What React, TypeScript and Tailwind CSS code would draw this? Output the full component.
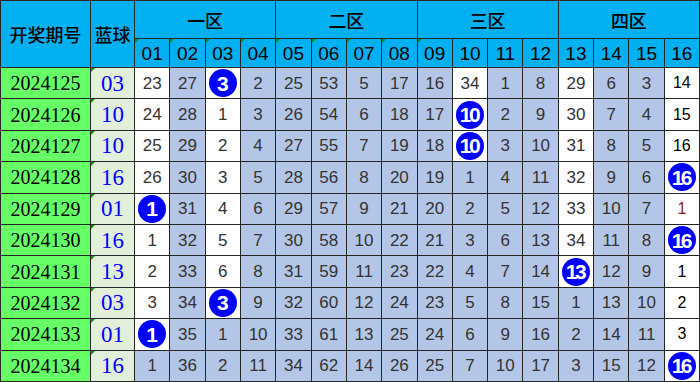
import React from 'react'

// 0 = blue cell, 1 = white cell, 2 = ball (white cell)
type Row = { issue: string; blue: string; nums: number[]; marks: number[] }

const rows: Row[] = [
  { issue: '2024125', blue: '03', nums: [23, 27, 3, 2, 25, 53, 5, 17, 16, 34, 1, 8, 29, 6, 3, 14], marks: [1, 0, 2, 0, 0, 0, 0, 0, 0, 1, 0, 0, 1, 0, 0, 1] },
  { issue: '2024126', blue: '10', nums: [24, 28, 1, 3, 26, 54, 6, 18, 17, 10, 2, 9, 30, 7, 4, 15], marks: [1, 0, 1, 0, 0, 0, 0, 0, 0, 2, 0, 0, 1, 0, 0, 1] },
  { issue: '2024127', blue: '10', nums: [25, 29, 2, 4, 27, 55, 7, 19, 18, 10, 3, 10, 31, 8, 5, 16], marks: [1, 0, 1, 0, 0, 0, 0, 0, 0, 2, 0, 0, 1, 0, 0, 1] },
  { issue: '2024128', blue: '16', nums: [26, 30, 3, 5, 28, 56, 8, 20, 19, 1, 4, 11, 32, 9, 6, 16], marks: [1, 0, 1, 0, 0, 0, 0, 0, 0, 0, 0, 0, 1, 0, 0, 2] },
  { issue: '2024129', blue: '01', nums: [1, 31, 4, 6, 29, 57, 9, 21, 20, 2, 5, 12, 33, 10, 7, 1], marks: [2, 0, 1, 0, 0, 0, 0, 0, 0, 0, 0, 0, 1, 0, 0, 1] },
  { issue: '2024130', blue: '16', nums: [1, 32, 5, 7, 30, 58, 10, 22, 21, 3, 6, 13, 34, 11, 8, 16], marks: [1, 0, 1, 0, 0, 0, 0, 0, 0, 0, 0, 0, 1, 0, 0, 2] },
  { issue: '2024131', blue: '13', nums: [2, 33, 6, 8, 31, 59, 11, 23, 22, 4, 7, 14, 13, 12, 9, 1], marks: [1, 0, 1, 0, 0, 0, 0, 0, 0, 0, 0, 0, 2, 0, 0, 1] },
  { issue: '2024132', blue: '03', nums: [3, 34, 3, 9, 32, 60, 12, 24, 23, 5, 8, 15, 1, 13, 10, 2], marks: [1, 0, 2, 0, 0, 0, 0, 0, 0, 0, 0, 0, 0, 0, 0, 1] },
  { issue: '2024133', blue: '01', nums: [1, 35, 1, 10, 33, 61, 13, 25, 24, 6, 9, 16, 2, 14, 11, 3], marks: [2, 0, 0, 0, 0, 0, 0, 0, 0, 0, 0, 0, 0, 0, 0, 1] },
  { issue: '2024134', blue: '16', nums: [1, 36, 2, 11, 34, 62, 14, 26, 25, 7, 10, 17, 3, 15, 12, 16], marks: [0, 0, 0, 0, 0, 0, 0, 0, 0, 0, 0, 0, 0, 0, 0, 2] },
]

const zones = ['一区', '二区', '三区', '四区']
const cols = Array.from({ length: 16 }, (_, i) => String(i + 1).padStart(2, '0'))

const sans = "font-['Liberation_Sans','Noto_Sans_CJK_SC',sans-serif]"
const cjk = "font-['Noto_Sans_CJK_SC',sans-serif]"
const serif = "font-['Liberation_Serif',serif]"

function Flag() {
  return <span className="absolute left-0 top-0 w-0 h-0 border-t-[4px] border-r-[4px] border-t-[#1f8a1f] border-r-transparent" />
}

function Ball({ n }: { n: number }) {
  return (
    <div className="w-[28px] h-[28px] rounded-full bg-[#0000ff] flex items-center justify-center">
      <span className={`${sans} text-white font-bold text-[21px] leading-none ${n >= 10 ? 'tracking-[-2.5px] -ml-[2px]' : ''}`}>{n}</span>
    </div>
  )
}

export default function App() {
  return (
    <div className="w-[700px] h-[382px] bg-white overflow-hidden">
      <div className="grid w-full h-full gap-px p-px bg-[#262626] leading-none grid-cols-[89px_43px_repeat(16,minmax(0,1fr))] grid-rows-[37px_28px_repeat(10,minmax(0,1fr))]">
        {/* Header */}
        <div className={`row-span-2 bg-[#00b0f0] flex items-center justify-center text-[18px] font-medium text-black ${cjk}`}>开奖期号</div>
        <div className={`row-span-2 bg-[#00b0f0] flex items-center justify-center text-[18px] font-medium text-black ${cjk}`}>蓝球</div>
        {zones.map((z) => (
          <div key={z} className={`col-span-4 bg-[#00b0f0] flex items-center justify-center text-[18px] font-medium text-black ${cjk}`}>
            {z}
          </div>
        ))}
        {cols.map((c, i) => (
          <div key={c} className={`relative bg-[#00b0f0] flex items-center justify-center text-[19px] text-black ${sans}`}>
            {i < 9 && <Flag />}
            {c}
          </div>
        ))}

        {/* Body */}
        {rows.map((r) => (
          <React.Fragment key={r.issue}>
            <div className={`bg-[#66ff66] flex items-center justify-center text-[20px] text-black ${serif}`}>{r.issue}</div>
            <div className={`relative bg-[#e2efda] flex items-center justify-center text-[23px] text-[#0000ff] ${serif}`}>
              <Flag />
              {r.blue}
            </div>
            {r.nums.map((n, i) => {
              const m = r.marks[i]
              const last = i === 15
              return (
                <div
                  key={i}
                  className={`flex items-center justify-center ${sans} ${m === 0 ? 'bg-[#b4c6e7]' : 'bg-white'} ${last ? 'text-[16px]' : 'text-[17px]'} ${last ? (r.issue === '2024129' ? 'text-[#8b1a1a]' : 'text-black') : 'text-[#333333]'}`}
                >
                  {m === 2 ? <Ball n={n} /> : n}
                </div>
              )
            })}
          </React.Fragment>
        ))}
      </div>
    </div>
  )
}
